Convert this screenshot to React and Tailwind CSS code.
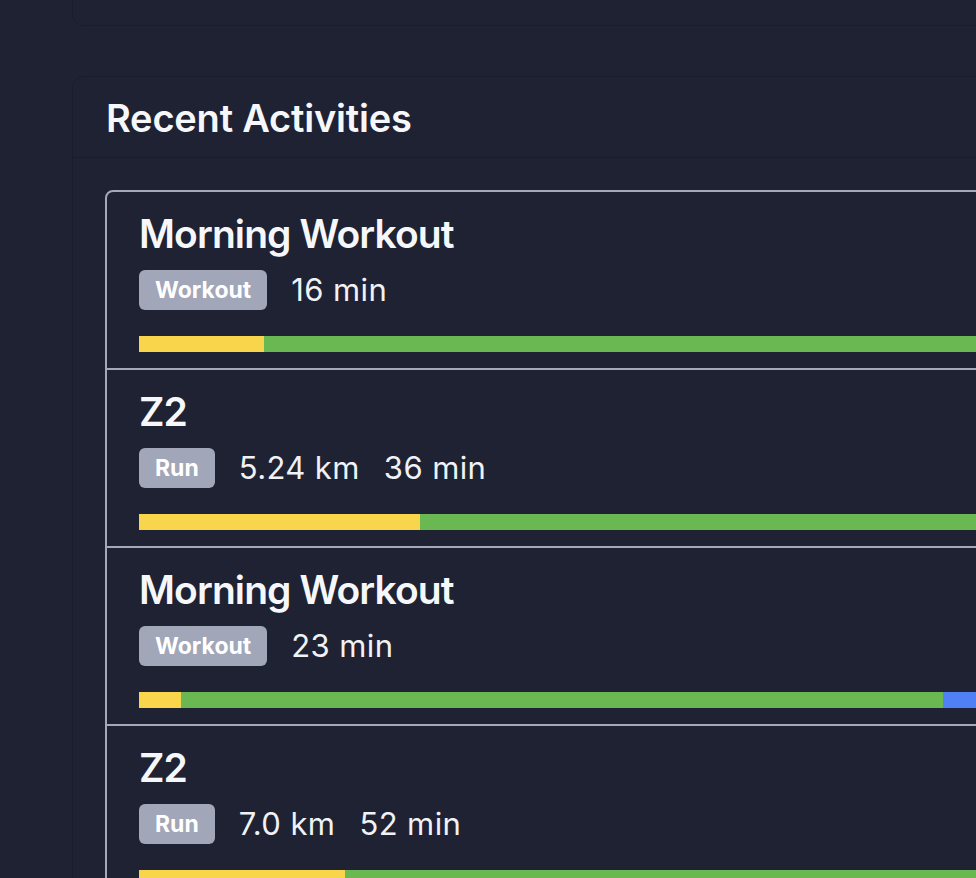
import React from "react";

const activities = [
  { title: "Morning Workout", type: "Workout", meta: ["16 min"], bars: [125, null] },
  { title: "Z2", type: "Run", meta: ["5.24 km", "36 min"], bars: [281, null] },
  { title: "Morning Workout", type: "Workout", meta: ["23 min"], bars: [42, 762, null] },
  { title: "Z2", type: "Run", meta: ["7.0 km", "52 min"], bars: [206, null] },
];

const colors = ["bg-[#f8d54a]", "bg-[#6ab851]", "bg-[#5080f5]"];

function Bar({ bars }) {
  return (
    <div className="flex h-[16px] w-full">
      {bars.map((w, i) =>
        w === null ? (
          <div key={i} className={`flex-1 ${colors[i]}`} />
        ) : (
          <div key={i} className={`shrink-0 ${colors[i]}`} style={{ width: w }} />
        )
      )}
    </div>
  );
}

function Row({ a, first }) {
  return (
    <div className={`px-[32px] pt-[20px] pb-[16px] ${first ? "" : "border-t-2 border-[#a3a8bb]"}`}>
      <div className="text-[39px] leading-[44px] font-semibold text-[#f5f7fa] tracking-[-0.9px]">{a.title}</div>
      <div className="mt-[14px] flex items-center gap-[24px] h-[40px]">
        <span className="h-[40px] flex items-center px-[16px] rounded-[6px] bg-[#a1a6b8] text-white font-bold text-[23px]">
          {a.type}
        </span>
        {a.meta.map((m, i) => (
          <span key={i} className="text-[31px] text-[#f0f2f5] tracking-[0.4px]">{m}</span>
        ))}
      </div>
      <div className="mt-[26px]">
        <Bar bars={a.bars} />
      </div>
    </div>
  );
}

export default function App() {
  return (
    <div
      className="w-[976px] h-[878px] overflow-hidden bg-[#1e2233]"
      style={{ fontFamily: "Inter, 'Noto Sans', sans-serif" }}
    >
      <div className="pl-[72px] flex flex-col gap-[50px] mt-[-60px]">
        <div className="w-[1100px] h-[86px] rounded-[12px] border border-[#1a1e2c]" />
        <div className="w-[1100px] rounded-[12px] border border-[#1a1e2c]">
          <div className="h-[81px] flex items-center px-[33px] border-b border-[#1a1e2c]">
            <h2 className="text-[38px] leading-[48px] font-semibold text-[#f5f7fa] tracking-[-0.2px] pt-[2px]">
              Recent Activities
            </h2>
          </div>
          <div className="px-[32px] pt-[32px]">
            <div className="rounded-[8px] border-2 border-[#a3a8bb] overflow-hidden">
              {activities.map((a, i) => (
                <Row key={i} a={a} first={i === 0} />
              ))}
            </div>
          </div>
        </div>
      </div>
    </div>
  );
}
